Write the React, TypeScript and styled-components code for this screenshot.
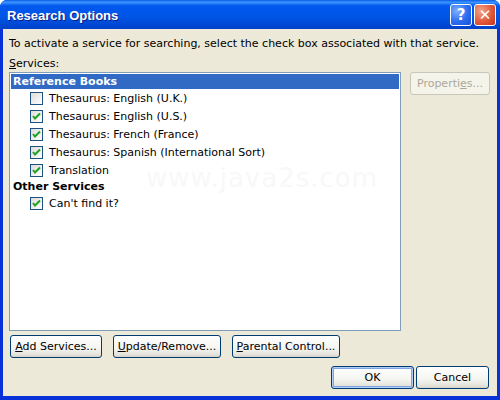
import React from 'react'
import styled, { createGlobalStyle } from 'styled-components'

const Global = createGlobalStyle`
  html, body { margin: 0; padding: 0; background: #fff; }
  body { font-family: "DejaVu Sans", Tahoma, sans-serif; font-size: 11px; color: #000; }
`

const Frame = styled.div`
  width: 500px;
  height: 400px;
  box-sizing: border-box;
  display: flex;
  flex-direction: column;
  background: #0831d9;
  border-radius: 7px 7px 0 0;
  overflow: hidden;
`
const TitleBar = styled.div`
  height: 29px;
  flex: none;
  display: flex;
  align-items: center;
  padding: 0 4px 0 7px;
  background: linear-gradient(#0a5fe8 0%, #3d95ff 8%, #0058ee 20%, #0055e5 60%, #0045d0 90%, #0042c8 100%);
`
const Title = styled.div`
  flex: 1;
  color: #fff;
  font-family: "Liberation Sans", Arial, sans-serif;
  font-weight: bold;
  font-size: 13px;
  text-shadow: 1px 1px 0 #0a1e84;
  padding-top: 1px;
`
const CapButton = styled.div<{ $red?: boolean }>`
  width: 22px;
  height: 22px;
  box-sizing: border-box;
  margin-left: 2px;
  border: 1px solid #fff;
  border-radius: 3px;
  display: flex;
  align-items: center;
  justify-content: center;
  color: #fff;
  font-weight: bold;
  font-size: 15px;
  background: ${p => (p.$red
    ? 'radial-gradient(circle at 30% 30%, #f0a58a, #e1593a 55%, #c2351a)'
    : 'radial-gradient(circle at 30% 30%, #7fb1ff, #2b6cf0 55%, #1a4fd8)')};
`
const Body = styled.div`
  flex: 1;
  margin: 0 3px 4px 3px;
  background: #ece9d8;
  padding: 8px 6px 0 6px;
  display: flex;
  flex-direction: column;
`
const Intro = styled.div`
  height: 14px;
  line-height: 14px;
`
const Label = styled.div`
  margin-top: 6px;
  height: 14px;
  line-height: 14px;
`
const Main = styled.div`
  display: flex;
  gap: 9px;
  margin-top: 1px;
`
const ListBox = styled.div`
  position: relative;
  width: 392px;
  height: 259px;
  box-sizing: border-box;
  border: 1px solid #7f9db9;
  background: #fff;
  padding: 1px;
  overflow: hidden;
`
const Group = styled.div<{ $selected?: boolean }>`
  position: relative;
  height: 15px;
  line-height: 15px;
  padding-left: 2px;
  font-weight: bold;
  font-size: 11px;
  background: ${p => (p.$selected ? '#316ac5' : 'transparent')};
  color: ${p => (p.$selected ? '#fff' : '#000')};
`
const Item = styled.div`
  position: relative;
  height: 18px;
  display: flex;
  align-items: center;
  padding-left: 19px;
  gap: 6px;
`
const Box = styled.div`
  width: 13px;
  height: 13px;
  box-sizing: border-box;
  border: 1px solid #1c5180;
  background: linear-gradient(135deg, #dcdcd7, #fff);
  display: flex;
  align-items: center;
  justify-content: center;
`
const Watermark = styled.div`
  position: absolute;
  left: 136px;
  top: 90px;
  font-size: 26px;
  letter-spacing: 1px;
  white-space: nowrap;
  color: #f8f8f8;
  pointer-events: none;
`
const Side = styled.div`
  display: flex;
  flex-direction: column;
`
const Button = styled.button<{ $w: number; $default?: boolean }>`
  width: ${p => p.$w}px;
  height: 23px;
  box-sizing: border-box;
  font-family: "DejaVu Sans", Tahoma, sans-serif;
  font-size: 11px;
  color: #000;
  padding: 0;
  border: 1px solid #003c74;
  border-radius: 3px;
  background: linear-gradient(#fff 0%, #f4f4f0 60%, #e3e2da 90%, #d6d0c5 100%);
  box-shadow: ${p => (p.$default ? 'inset 0 0 0 1px #b3cdf6, inset 0 0 0 2px #7ea4e3' : 'none')};
  &:disabled {
    color: #aca899;
    border-color: #c9c7ba;
    background: #f5f4ea;
  }
  u { text-decoration: underline; }
`
const ButtonRow = styled.div`
  display: flex;
  gap: 11px;
  margin-top: 4px;
  padding-left: 1px;
`
const Footer = styled.div`
  display: flex;
  justify-content: flex-end;
  gap: 2px;
  margin-top: 8px;
  padding-right: 2px;
`

const Check = () => (
  <svg width="9" height="9" viewBox="0 0 9 9">
    <path d="M1 4 L3 6.5 L8 1.5" fill="none" stroke="#21a121" strokeWidth="2" />
  </svg>
)

const books = [
  { name: 'Thesaurus: English (U.K.)', on: false },
  { name: 'Thesaurus: English (U.S.)', on: true },
  { name: 'Thesaurus: French (France)', on: true },
  { name: 'Thesaurus: Spanish (International Sort)', on: true },
  { name: 'Translation', on: true },
]

export default function App() {
  return (
    <Frame>
      <Global />
      <TitleBar>
        <Title>Research Options</Title>
        <CapButton>?</CapButton>
        <CapButton $red>✕</CapButton>
      </TitleBar>
      <Body>
        <Intro>To activate a service for searching, select the check box associated with that service.</Intro>
        <Label><u>S</u>ervices:</Label>
        <Main>
          <ListBox>
            <Watermark>www.java2s.com</Watermark>
            <Group $selected>Reference Books</Group>
            {books.map(b => (
              <Item key={b.name}>
                <Box>{b.on && <Check />}</Box>
                {b.name}
              </Item>
            ))}
            <Group>Other Services</Group>
            <Item>
              <Box><Check /></Box>
              Can't find it?
            </Item>
          </ListBox>
          <Side>
            <Button $w={80} disabled>Properti<u>e</u>s...</Button>
          </Side>
        </Main>
        <ButtonRow>
          <Button $w={92}><u>A</u>dd Services...</Button>
          <Button $w={108}><u>U</u>pdate/Remove...</Button>
          <Button $w={108}><u>P</u>arental Control...</Button>
        </ButtonRow>
        <Footer>
          <Button $w={83} $default>OK</Button>
          <Button $w={73}>Cancel</Button>
        </Footer>
      </Body>
    </Frame>
  )
}
